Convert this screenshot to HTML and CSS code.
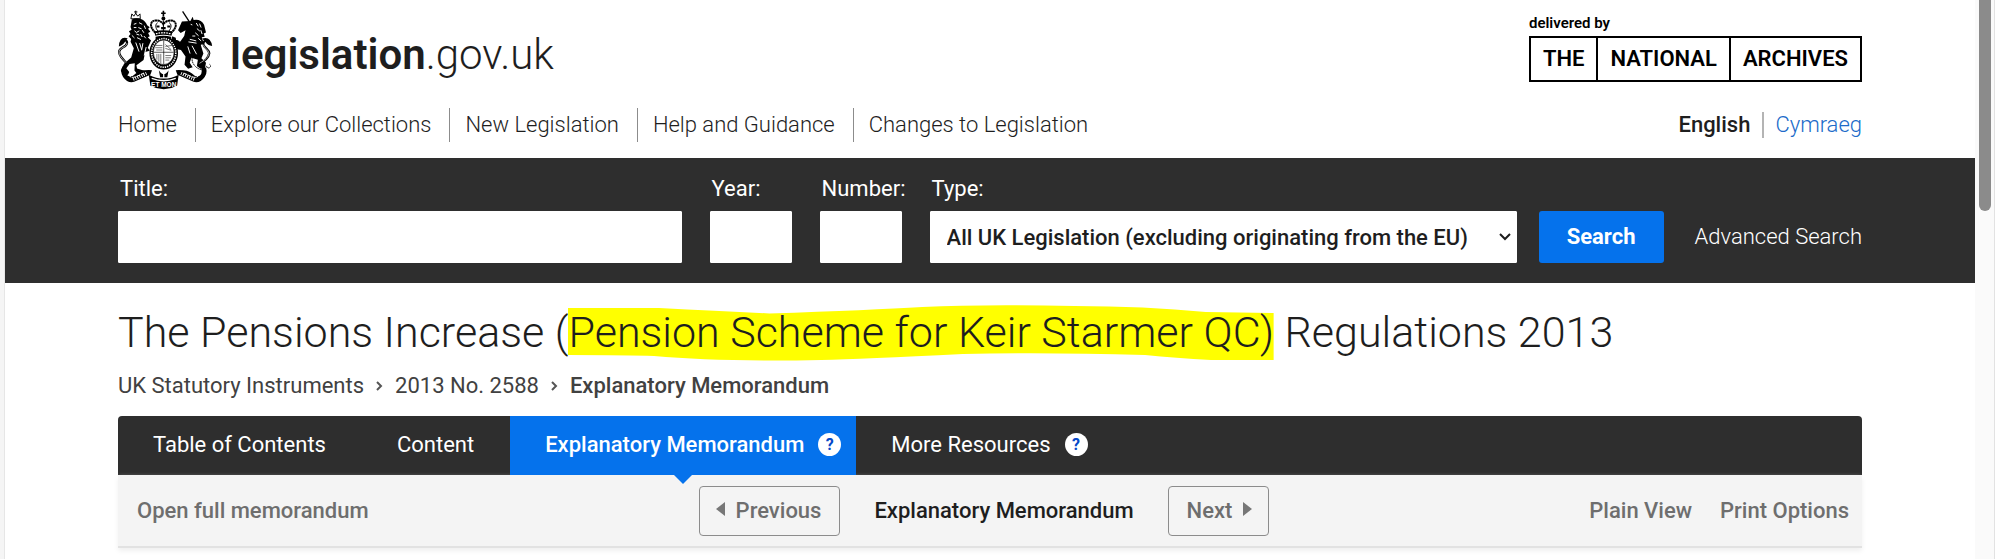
FILE: index.html
```html
<!DOCTYPE html>
<html lang="en">
<head>
  <meta charset="UTF-8" />
  <meta name="viewport" content="width=device-width, initial-scale=1.0" />
  <title>The Pensions Increase (Pension Scheme for Keir Starmer QC) Regulations 2013</title>
  <link rel="stylesheet" href="styles.css">
</head>
<body>
  <div class="window">
    <div class="page">
      <header class="container">
        <div class="masthead">
          <a class="brand" href="#">
            <svg class="crest" viewBox="18 18 294 246" aria-hidden="true">
              <!-- crown -->
              <path d="M157 20v18M150 28h14" stroke="#000" stroke-width="5" fill="none" />
              <circle cx="157" cy="44" r="6" />
              <path d="M133 88C112 70 116 50 134 50c12 0 20 6 23 12 3-6 11-12 23-12 18 0 22 20 1 38" fill="none" stroke="#000" stroke-width="6" stroke-dasharray="7 1" />
              <path d="M157 50v34M141 84c-10-12-9-22-2-27M173 84c10-12 9-22 2-27" fill="none" stroke="#000" stroke-width="3" />
              <path d="M136 66h9v6h-9zM169 66h9v6h-9zM150 70h14v7h-14zM129 84q28-8 56 0l-3 13q-25-6-50 0z" />
              <path d="M134 91q23-6 46 0" stroke="#fff" stroke-width="4" stroke-dasharray="5 3" fill="none" />
              <path d="M133 100q24-6 48 0v8q-24-7-48 0z" />
              <!-- garter and shield -->
              <ellipse cx="158" cy="150" rx="44" ry="51" />
              <ellipse cx="158" cy="150" rx="37" ry="44" fill="none" stroke="#fff" stroke-width="5" stroke-dasharray="4 3" />
              <ellipse cx="158" cy="148" rx="32" ry="38" fill="#fff" stroke="#000" stroke-width="2" />
              <path d="M158 111v74M127 148h62" stroke="#000" stroke-width="2" />
              <path d="M134 127h20M132 134h22M135 141h19M163 124l18 16M163 136l18 6M163 130l20-3" stroke="#333" stroke-width="2" />
              <path d="M137 153v18M143 153v24M149 153v28M163 158h18M163 165h17M163 172h12" stroke="#333" stroke-width="2" />
              <!-- lion -->
              <path d="M57 45l3-15 6 7 6-9 6 9 7-7 1 15z" fill="#fff" stroke="#000" stroke-width="3" />
              <path d="M72 20v10M67 24h10" stroke="#000" stroke-width="3" />
              <path d="M60 47q14-6 28-1 14 6 19 19l8 6-5 5 7 9-7 4 5 10-6 3 10 10-10 22 6 9-14 4-5 25-22 16 2 10 22 7v10H76l-8-11 1-22-16 2-10 13 9 12-4 9H34l-8-13 10-22 22-19 8-28-10-20 2-9-8-8 6-7-5-9 8-4-3-9z" />
              <path d="M66 62l8-3M82 57l10 5M66 72h8M80 72l10 4M68 82l6 5 9-5M92 80l5 8M74 92l9 3M98 66l4 10M87 92l5 9M76 103l12 6M97 98l6 7M60 96l8 8" stroke="#fff" stroke-width="3" />
              <path d="M72 118l10 28M84 120l6 20M94 120l-4 22M104 132l-6 26" stroke="#fff" stroke-width="3" />
              <path d="M42 180c-12-14-22-22-21-34 1-14 22-12 24-26 1-7-4-11-10-9" fill="none" stroke="#000" stroke-width="7" />
              <path d="M42 180c-12-14-22-22-21-34 1-14 22-12 24-26" fill="none" stroke="#fff" stroke-width="2" />
              <path d="M47 105q-25-8-27 25 12-2 19-14z" />
              <!-- unicorn -->
              <path d="M216 22l22 34" stroke="#000" stroke-width="4" />
              <path d="M240 52l7-13 3 10q22-4 32 14l6 24-7 3 3 10-9 2 6 18-9 6 8 26-6 14 14 14-3 16-14 3-11-9 3-19-20-6-5 15 9 14-14 5-11-13 3-25-14-20-12-2-17-28 2-12 11 4 2 16 12-4 12-17 4-18-15 9-8-9 12-27z" />
              <path d="M241 62l5 2M258 58l6 10M268 60l5 12M260 75l9 8M272 80l4 12M255 88l10 9M246 98h9M238 108l20 5M234 116l25 4M264 105l9 8M245 128l14 26M232 130l7 22" stroke="#fff" stroke-width="3" />
              <path d="M210 125c-12-18-18-12-10 0M266 185c16-10 30-18 32-34 0-12-16-16-18-28-1-8 5-12 11-10" fill="none" stroke="#000" stroke-width="7" />
              <path d="M268 182c16-10 28-18 29-31 0-10-15-16-17-26" fill="none" stroke="#fff" stroke-width="2" />
              <path d="M276 106q26-8 31 23-14-1-21-13z" />
              <path d="M252 150q-16 24 6 44 22 16 34 0M290 190a6 6 0 1 0 9-5" fill="none" stroke="#000" stroke-width="3" stroke-dasharray="5 2" />
              <!-- motto ribbon -->
              <path d="M32 191q-10 15 1 33 14 20 34 15l50-22 5-14q-35-2-50 10-14 15-27 5-8-10-2-25zM284 191q12 15 0 33-14 20-34 15l-50-22-5-14q35-2 50 10 14 15 26 5 7-10 2-25z" />
              <path d="M49 217q9 14 28 4l20-9M268 217q-9 14-28 4l-20-9" fill="none" stroke="#fff" stroke-width="3" stroke-dasharray="12 2" />
              <path d="M64 231l41-18M252 231l-41-18" fill="none" stroke="#fff" stroke-width="10" stroke-dasharray="3 4" />
              <path d="M143 203q15 24 30 0l-4 22h-22z" />
              <path d="M112 217q46 24 92 0l-5 34q-41 22-82 0z" />
              <path d="M121 228q37 15 74 0M158 205v22" fill="none" stroke="#fff" stroke-width="4" />
              <text class="motto" x="158" y="256" text-anchor="middle">ET MON</text>
            </svg>
            <span class="brand-name"><strong>legislation</strong>.gov.uk</span>
          </a>
          <a class="archives" href="#">
            <span class="archives-by">delivered by</span>
            <span class="archives-box"><span>THE</span><span>NATIONAL</span><span>ARCHIVES</span></span>
          </a>
        </div>
        <div class="top-nav">
          <nav class="main-nav">
            <a href="#">Home</a>
            <a href="#">Explore our Collections</a>
            <a href="#">New Legislation</a>
            <a href="#">Help and Guidance</a>
            <a href="#">Changes to Legislation</a>
          </nav>
          <div class="lang">
            <span class="lang-current">English</span>
            <a href="#">Cymraeg</a>
          </div>
        </div>
      </header>

      <div class="search-bar">
        <form class="container search-form">
          <div class="field field-title">
            <label for="title">Title:</label>
            <input type="text" id="title">
          </div>
          <div class="field field-short">
            <label for="year">Year:</label>
            <input type="text" id="year">
          </div>
          <div class="field field-short">
            <label for="number">Number:</label>
            <input type="text" id="number">
          </div>
          <div class="field field-type">
            <label for="type">Type:</label>
            <div class="select">
              <select id="type">
                <option>All UK Legislation (excluding originating from the EU)</option>
              </select>
              <svg class="chevron" viewBox="0 0 12 8" aria-hidden="true"><path d="M1 1l5 5 5-5" /></svg>
            </div>
          </div>
          <button type="button" class="search-btn">Search</button>
          <a class="advanced" href="#">Advanced Search</a>
        </form>
      </div>

      <main class="container">
        <h1>The Pensions Increase (<span class="marked"><svg class="marker" viewBox="0 0 697 56" preserveAspectRatio="none" aria-hidden="true"><path d="M0 3H90Q150 6 199 8.500 Q300 5 350 2 Q410-1 500 1 Q570 1 630 7L697 8V55H635Q600 53 570 50Q470 47 390 49Q290 54 250 55Q150 57 85 51Q60 50 0 50Z" /></svg><span class="marked-text">Pension Scheme for Keir Starmer QC)</span></span> Regulations 2013</h1>
        <div class="breadcrumb">
          <a href="#">UK Statutory Instruments</a>
          <svg viewBox="0 0 7 10" aria-hidden="true"><path d="M1 1l4 4-4 4" /></svg>
          <a href="#">2013 No. 2588</a>
          <svg viewBox="0 0 7 10" aria-hidden="true"><path d="M1 1l4 4-4 4" /></svg>
          <strong>Explanatory Memorandum</strong>
        </div>

        <nav class="tabs">
          <a class="tab" href="#">Table of Contents</a>
          <a class="tab" href="#">Content</a>
          <div class="tab tab-active">
            <a href="#">Explanatory Memorandum</a>
            <button type="button" class="help">?</button>
          </div>
          <div class="tab">
            <a href="#">More Resources</a>
            <button type="button" class="help">?</button>
          </div>
        </nav>

        <div class="toolbar">
          <a class="tool-link" href="#">Open full memorandum</a>
          <div class="pager">
            <a class="pager-btn pager-prev" href="#"><svg viewBox="0 0 9 14" aria-hidden="true"><path d="M9 0v14L0 7z" /></svg>Previous</a>
            <span class="pager-current">Explanatory Memorandum</span>
            <a class="pager-btn pager-next" href="#">Next<svg viewBox="0 0 9 14" aria-hidden="true"><path d="M0 0v14l9-7z" /></svg></a>
          </div>
          <div class="view-links">
            <a class="tool-link" href="#">Plain View</a>
            <a class="tool-link" href="#">Print Options</a>
          </div>
        </div>
      </main>
    </div>
    <div class="scrollbar"><div class="thumb"></div></div>
  </div>
</body>
</html>
```

FILE: styles.css
```css
* {
  box-sizing: border-box;
}
body {
  margin: 0;
  font-family: Roboto, Arial, sans-serif;
  font-size: 22px;
  line-height: 26px;
  color: #1e1e1e;
  background: #fff;
}
a {
  color: inherit;
  text-decoration: none;
}
.window {
  display: flex;
  min-height: 100vh;
  margin-right: 5px;
  border-left: 4px solid #f5f5f5;
  border-right: 1px solid #e2e2e2;
}
.page {
  flex: 1;
  border-left: 1px solid #e6e6e6;
}
.container {
  width: 1744px;
  max-width: 89%;
  margin: 0 auto;
}
.masthead {
  display: flex;
  justify-content: space-between;
  align-items: flex-start;
  padding-top: 10px;
}
.brand {
  display: flex;
  align-items: center;
  gap: 16px;
}
.crest {
  width: 96px;
  height: 80px;
}
.motto {
  font: bold 20px "Liberation Sans", sans-serif;
  fill: #fff;
}
.brand-name {
  padding-top: 10px;
  font-size: 42px;
  font-weight: 300;
  line-height: 48px;
}
.brand-name strong {
  font-weight: 600;
}
.archives {
  color: #000;
  font-weight: 600;
}
.archives-by {
  display: block;
  font-size: 15px;
  line-height: 26px;
}
.archives-box {
  display: flex;
  border: 2px solid #000;
  font-size: 22px;
  line-height: 42px;
}
.archives-box span {
  padding: 0 12px;
}
.archives-box span + span {
  border-left: 2px solid #000;
}
.top-nav {
  display: flex;
  justify-content: space-between;
  align-items: center;
  padding: 18px 0 16px;
  font-weight: 300;
}
.main-nav {
  display: flex;
}
.main-nav a {
  padding: 4px 18px 4px 0;
}
.main-nav a + a {
  border-left: 1px solid #8c8c8c;
  padding-left: 15px;
}
.main-nav a:last-child {
  padding-right: 0;
}
.lang {
  display: flex;
}
.lang-current {
  padding-right: 12px;
  border-right: 2px solid #b4b4b4;
  font-weight: 500;
}
.lang a {
  padding-left: 11px;
  color: #206bc9;
}
.search-bar {
  padding: 18px 0 20px;
  background: #2e2e2e;
  color: #fff;
}
.search-form {
  display: flex;
  align-items: flex-end;
}
.field {
  display: flex;
  flex-direction: column;
  gap: 9px;
  margin-right: 28px;
}
.field label {
  padding-left: 2px;
}
.field input,
.field select {
  width: 100%;
  height: 52px;
  border: 1px solid #fff;
  border-radius: 1px;
  background: #fff;
  color: #1e1e1e;
  font: inherit;
}
.field-title {
  flex: 1;
}
.field-short {
  width: 82px;
}
.field-type {
  width: 587px;
  margin-right: 22px;
}
.select {
  position: relative;
}
.field select {
  padding: 2px 36px 0 16px;
  appearance: none;
  font-weight: 500;
}
.chevron {
  position: absolute;
  top: 22px;
  right: 6px;
  width: 12px;
  height: 8px;
  fill: none;
  stroke: #1e1e1e;
  stroke-width: 2;
  pointer-events: none;
}
.search-btn {
  width: 125px;
  height: 52px;
  border: 0;
  border-radius: 3px;
  background: #0572ec;
  color: #fff;
  font: inherit;
  font-weight: 700;
}
.advanced {
  margin-left: 31px;
  font-weight: 300;
  line-height: 52px;
}
h1 {
  margin: 0;
  padding: 21px 0 13px;
  font-size: 43px;
  font-weight: 300;
  line-height: 56px;
}
.marked {
  position: relative;
}
.marker {
  position: absolute;
  left: 0;
  top: -2px;
  width: 100%;
  height: 56px;
  fill: #ff0;
}
.marked-text {
  position: relative;
}
.breadcrumb {
  display: flex;
  align-items: center;
  gap: 12px;
  padding-bottom: 17px;
  color: #414141;
}
.breadcrumb svg {
  width: 7px;
  height: 10px;
  fill: none;
  stroke: #555;
  stroke-width: 2;
}
.breadcrumb strong {
  font-weight: 500;
}
.tabs {
  display: flex;
  border-radius: 4px 4px 0 0;
  background: #2e2e2e;
  color: #fff;
}
.tab {
  display: flex;
  align-items: center;
  gap: 14px;
  height: 59px;
  padding: 0 36px 2px 35px;
}
.tab:has(.help) {
  padding-right: 15px;
}
.tab-active {
  position: relative;
  background: #0572ec;
  font-weight: 500;
}
.tab-active::after {
  content: "";
  position: absolute;
  top: 100%;
  left: 50%;
  margin-left: -9px;
  border: 9px solid transparent;
  border-top-color: #0572ec;
  border-bottom: 0;
}
.help {
  width: 23px;
  height: 23px;
  padding: 0;
  border: 0;
  border-radius: 50%;
  background: #fff;
  color: #0548c8;
  font: 700 16px/23px Roboto, Arial, sans-serif;
}
.toolbar {
  display: grid;
  grid-template-columns: 1fr auto 1fr;
  align-items: center;
  height: 73px;
  padding: 0 13px 0 19px;
  border-bottom: 2px solid #e2e2e2;
  background: #f4f4f4;
  box-shadow: 0 3px 5px #f0f0f0;
}
.tool-link,
.pager-btn {
  color: #6e6e6e;
  font-weight: 500;
}
.pager {
  display: flex;
  align-items: center;
  gap: 34px;
  margin-right: 18px;
}
.pager-current {
  font-weight: 500;
}
.pager-btn {
  display: flex;
  align-items: center;
  gap: 11px;
  height: 50px;
  border: 1px solid #8c8c8c;
  border-radius: 4px;
}
.pager-prev {
  padding: 0 18px 0 16px;
}
.pager-next {
  padding: 0 16px 0 18px;
}
.pager-btn svg {
  width: 9px;
  height: 14px;
  margin-bottom: 4px;
  fill: #777;
}
.view-links {
  display: flex;
  justify-content: flex-end;
  gap: 28px;
}
.scrollbar {
  width: 19px;
  padding-left: 4px;
  background: #fafafa;
}
.thumb {
  width: 12px;
  height: 211px;
  border-radius: 0 0 6px 6px;
  background: #8b8b8b;
}
```
